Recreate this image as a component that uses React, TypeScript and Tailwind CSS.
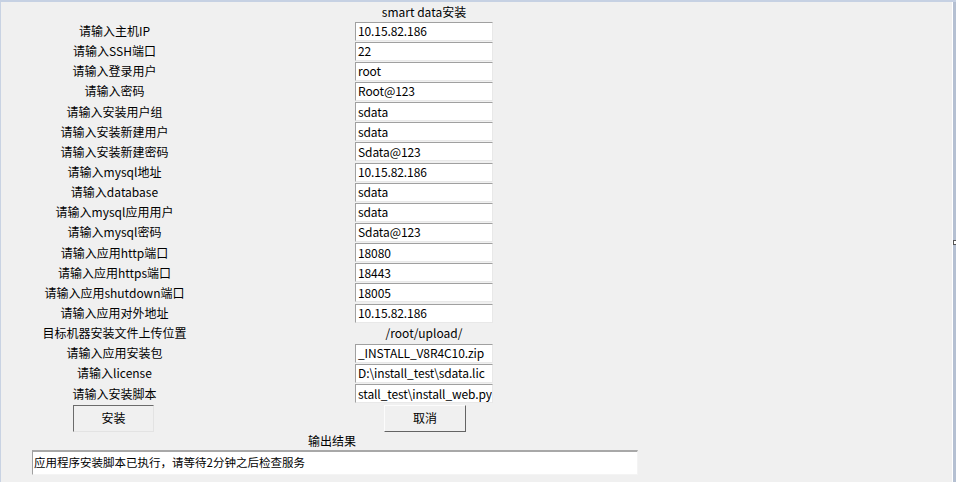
import React from 'react';

type Field = { label: string; value: string; plain?: boolean };

// installer form fields, in order
const FIELDS: Field[] = [
  { label: '请输入主机IP', value: '10.15.82.186' },
  { label: '请输入SSH端口', value: '22' },
  { label: '请输入登录用户', value: 'root' },
  { label: '请输入密码', value: 'Root@123' },
  { label: '请输入安装用户组', value: 'sdata' },
  { label: '请输入安装新建用户', value: 'sdata' },
  { label: '请输入安装新建密码', value: 'Sdata@123' },
  { label: '请输入mysql地址', value: '10.15.82.186' },
  { label: '请输入database', value: 'sdata' },
  { label: '请输入mysql应用用户', value: 'sdata' },
  { label: '请输入mysql密码', value: 'Sdata@123' },
  { label: '请输入应用http端口', value: '18080' },
  { label: '请输入应用https端口', value: '18443' },
  { label: '请输入应用shutdown端口', value: '18005' },
  { label: '请输入应用对外地址', value: '10.15.82.186' },
  { label: '目标机器安装文件上传位置', value: '/root/upload/', plain: true },
  { label: '请输入应用安装包', value: '_INSTALL_V8R4C10.zip' },
  { label: '请输入license', value: 'D:\\install_test\\sdata.lic' },
  { label: '请输入安装脚本', value: 'stall_test\\install_web.py' },
];

const FONT = { fontFamily: '"Noto Sans CJK SC", "Noto Sans", sans-serif' };

function Row({ field }: { field: Field }) {
  return (
    <div className="flex h-[20.15px] items-center">
      <div className="w-[227px] text-center leading-none">{field.label}</div>
      <div className="w-[127px]" />
      {field.plain ? (
        <div className="w-[138px] text-center leading-none">{field.value}</div>
      ) : (
        <div className="flex h-[19px] w-[138px] items-center overflow-hidden whitespace-nowrap border-t border-l border-b border-r border-t-[#a0a0a0] border-l-[#a0a0a0] border-b-[#e8e8e8] border-r-[#e8e8e8] bg-white pl-[2px] tracking-[-0.1px] leading-none">
          {field.value}
        </div>
      )}
    </div>
  );
}

export default function App() {
  return (
    <div
      className="flex h-[482px] w-[956px] flex-col overflow-hidden bg-[#f0f0f0] text-[12px] text-black"
      style={FONT}
    >
      <div className="h-[2px] bg-[#c6d1e3]" />
      <div className="flex flex-1">
        <div className="w-px bg-[#c9d3e3]" />
        <div className="flex flex-1 flex-col">
          <div className="flex h-[19px] items-center">
            <div className="w-[354px]" />
            <div className="w-[138px] text-center leading-none">smart data安装</div>
          </div>
          {FIELDS.map((f) => (
            <Row key={f.label} field={f} />
          ))}
          <div className="flex h-[28px] items-start pt-[1px]">
            <div className="w-[72px]" />
            <button className="flex h-[27px] w-[81px] items-center justify-center border border-t-[#6b6b6b] border-l-[#6b6b6b] border-b-[#e3e3e3] border-r-[#e3e3e3] bg-[#f0f0f0] leading-none">
              安装
            </button>
            <div className="w-[230px]" />
            <button className="flex h-[27px] w-[82px] items-center justify-center border border-t-[#fcfcfc] border-l-[#fcfcfc] border-b-[#646464] border-r-[#646464] bg-[#f0f0f0] leading-none">
              取消
            </button>
          </div>
          <div className="flex h-[18px] items-center">
            <div className="w-[294px]" />
            <div className="w-[74px] text-center leading-none">输出结果</div>
          </div>
          <div className="flex">
            <div className="w-[31px]" />
            <div className="flex h-[25px] w-[606px] items-center whitespace-nowrap border-t-2 border-l border-b border-r border-t-[#a8a8a8] border-l-[#a0a0a0] border-b-[#f4f4f4] border-r-[#f4f4f4] bg-white pl-[1px] text-[11.5px] leading-none">
              应用程序安装脚本已执行，请等待2分钟之后检查服务
            </div>
          </div>
        </div>
        <div className="w-px bg-white" />
        <div className="flex w-[3px] flex-col justify-center bg-[#b5c0d2]">
          <div className="h-[5px] w-[3px] border border-r-0 border-[#555555] bg-white" />
        </div>
      </div>
    </div>
  );
}
